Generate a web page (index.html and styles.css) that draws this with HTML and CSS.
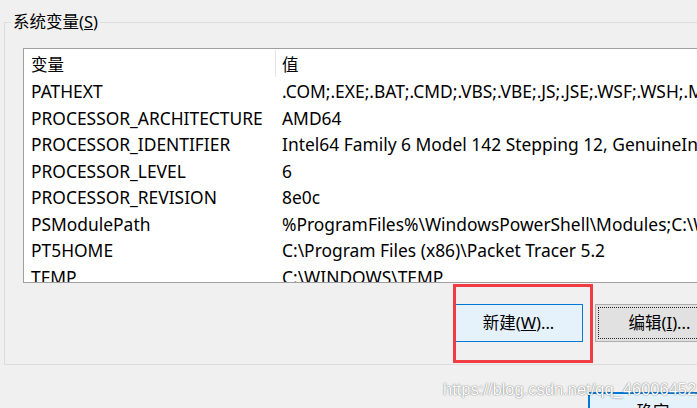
FILE: index.html
```html
<!DOCTYPE html>
<html lang="zh-CN">
<head>
<meta charset="utf-8">
<title>系统变量</title>
<link rel="stylesheet" href="styles.css">
</head>
<body>
<div class="page">
  <fieldset class="group">
    <legend class="group-title">系统变量(<u>S</u>)</legend>
    <div class="list">
      <div class="row head">
        <div class="cell name">变量</div>
        <div class="cell value">值</div>
      </div>
      <div class="row"><div class="cell name">PATHEXT</div><div class="cell value">.COM;.EXE;.BAT;.CMD;.VBS;.VBE;.JS;.JSE;.WSF;.WSH;.MSC</div></div>
      <div class="row"><div class="cell name">PROCESSOR_ARCHITECTURE</div><div class="cell value">AMD64</div></div>
      <div class="row"><div class="cell name">PROCESSOR_IDENTIFIER</div><div class="cell value">Intel64 Family 6 Model 142 Stepping 12, GenuineIntel</div></div>
      <div class="row"><div class="cell name">PROCESSOR_LEVEL</div><div class="cell value">6</div></div>
      <div class="row"><div class="cell name">PROCESSOR_REVISION</div><div class="cell value">8e0c</div></div>
      <div class="row"><div class="cell name">PSModulePath</div><div class="cell value">%ProgramFiles%\WindowsPowerShell\Modules;C:\WINDOWS\system32\WindowsPowerShell\v1.0\Modules</div></div>
      <div class="row"><div class="cell name">PT5HOME</div><div class="cell value">C:\Program Files (x86)\Packet Tracer 5.2</div></div>
      <div class="row"><div class="cell name">TEMP</div><div class="cell value">C:\WINDOWS\TEMP</div></div>
    </div>
    <div class="buttons">
      <button class="btn btn-default">新建(<u>W</u>)...</button>
      <button class="btn btn-focus">编辑(<u>I</u>)...</button>
    </div>
  </fieldset>
  <div class="footer">
    <button class="btn btn-ok">确定</button>
  </div>
  <div class="highlight"></div>
  <div class="watermark">https://blog.csdn.net/qq_46006452</div>
</div>
</body>
</html>
```
FILE: styles.css
```css
html, body {
  margin: 0;
  padding: 0;
  background: #f0f0f0;
}
body {
  width: 697px;
  height: 408px;
  overflow: hidden;
  font-family: "Noto Sans", "Noto Sans CJK SC", sans-serif;
  font-size: 16px;
  color: #000;
}
.page {
  position: relative;
  width: 697px;
  height: 408px;
  overflow: hidden;
}
.group {
  margin: 12px 0 0 4px;
  padding: 0 0 22px 0;
  width: 760px;
  min-width: 0;
  border: 1px solid #dcdcdc;
  box-sizing: border-box;
}
.group-title {
  margin-left: 6px;
  padding: 0 2px;
  line-height: 20px;
  font-size: 16.5px;
  color: #000;
}
.list {
  margin: 16px 0 0 18px;
  height: 235px;
  box-sizing: border-box;
  border: 1px solid #a0a0a0;
  background: #fff;
  overflow: hidden;
}
.row {
  display: grid;
  grid-template-columns: 252px auto;
  height: 26.5px;
  line-height: 26.5px;
  white-space: nowrap;
  font-size: 17.4px;
}
.row.head {
  height: 29px;
  line-height: 31px;
  font-size: 16.5px;
}
.cell {
  padding-left: 7px;
  overflow: hidden;
}
.row.head .name {
  border-right: 1px solid #e5e5e5;
  margin: 1px 0;
  line-height: 29px;
}
.value {
  padding-left: 6px;
}
.buttons {
  display: flex;
  gap: 12px;
  margin: 21px 0 0 449px;
}
.btn {
  font-family: "Noto Sans", "Noto Sans CJK SC", sans-serif;
  font-size: 16.5px;
  color: #000;
  height: 38px;
  width: 129px;
  padding: 0;
  box-sizing: border-box;
  line-height: 36px;
  flex: none;
}
.btn-default {
  background: #e5f1fb;
  border: 1px solid #0078d7;
}
.btn-focus {
  background: #e1e1e1;
  border: 1px solid #adadad;
  outline: 1px dotted #222;
  outline-offset: -4px;
}
.footer {
  margin-top: 27px;
  padding-left: 588px;
}
.btn-ok {
  background: #e5f1fb;
  border: 2px solid #0078d7;
  width: 130px;
  height: 40px;
  line-height: 26px;
  display: block;
  text-align: center;
}
.highlight {
  position: absolute;
  left: 453px;
  top: 284px;
  width: 140px;
  height: 79px;
  box-sizing: border-box;
  border: 3px solid #f03c42;
}
.watermark {
  position: absolute;
  left: 443px;
  top: 380px;
  font-family: "Liberation Sans", Arial, sans-serif;
  font-size: 16.5px;
  color: #fff;
  text-shadow: 0 0 1px rgba(0, 0, 0, 0.5), 0 0 2px rgba(0, 0, 0, 0.25);
  white-space: nowrap;
}
```
